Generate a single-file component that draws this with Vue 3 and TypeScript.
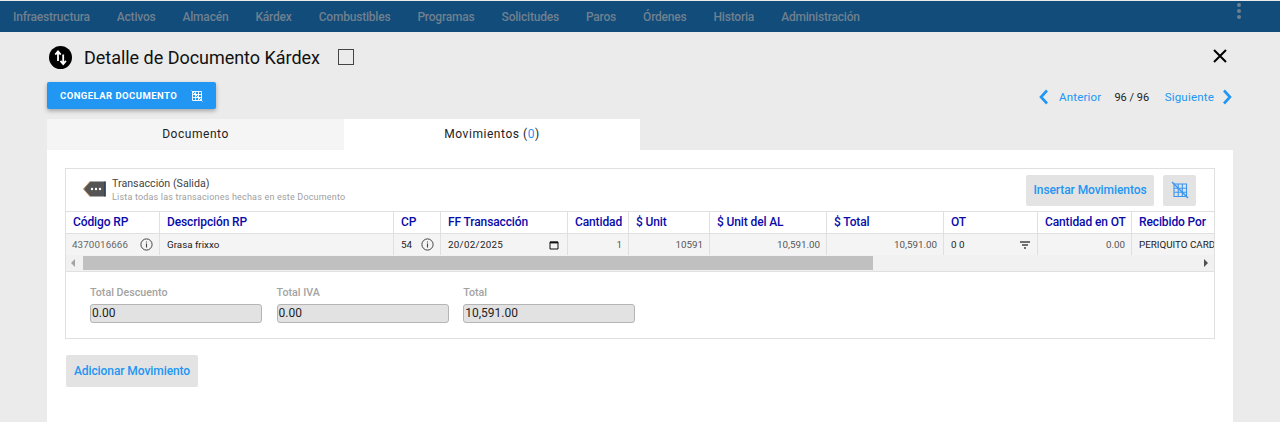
<script setup lang="ts">
interface Col { label: string; width: number }
const navItems: string[] = ['Infraestructura','Activos','Almacén','Kárdex','Combustibles','Programas','Solicitudes','Paros','Órdenes','Historia','Administración']
const cols: Col[] = [
  { label: 'Código RP', width: 94 },
  { label: 'Descripción RP', width: 234 },
  { label: 'CP', width: 47 },
  { label: 'FF Transacción', width: 127 },
  { label: 'Cantidad', width: 61 },
  { label: '$ Unit', width: 81 },
  { label: '$ Unit del AL', width: 117 },
  { label: '$ Total', width: 117 },
  { label: 'OT', width: 94 },
  { label: 'Cantidad en OT', width: 94 },
  { label: 'Recibido Por', width: 120 },
]
const gridTemplate = cols.map(c => c.width + 'px').join(' ')
const totals = [
  { label: 'Total Descuento', value: '0.00' },
  { label: 'Total IVA', value: '0.00' },
  { label: 'Total', value: '10,591.00' },
]
</script>

<template>
  <div class="page">
    <nav class="nav">
      <ul class="nav-list">
        <li v-for="n in navItems" :key="n">{{ n }}</li>
      </ul>
      <svg class="dots" width="6" height="18" viewBox="0 0 6 18"><circle cx="3" cy="3" r="2"/><circle cx="3" cy="9" r="2"/><circle cx="3" cy="15" r="2"/></svg>
    </nav>

    <main class="main">
      <header class="title-row">
        <span class="title-icon">
          <svg width="23" height="23" viewBox="0 0 23 23">
            <circle cx="11.5" cy="11.5" r="11.5" fill="#000"/>
            <path d="M9 15V5.5M6.3 8.6 9 5.3l2.7 3.3M14.2 8.5V18M11.5 14.9l2.7 3.3 2.7-3.3" fill="none" stroke="#fff" stroke-width="1.8"/>
          </svg>
        </span>
        <h1 class="title">Detalle de Documento Kárdex</h1>
        <span class="check"></span>
        <svg class="close" width="16" height="16" viewBox="0 0 16 16"><path d="M2 2l12 12M14 2 2 14" stroke="#000" stroke-width="2" fill="none"/></svg>
      </header>

      <div class="action-row">
        <button class="freeze" type="button">
          <span>CONGELAR DOCUMENTO</span>
          <svg width="12" height="12" viewBox="0 0 12 12" fill="none" stroke="#fff" stroke-width=".9"><path d="M1.5 1.5h9v9h-9zM1.5 4.5h9M1.5 7.5h9M4.5 1.5v9M7.5 1.5v9M.5.5l11 11"/></svg>
        </button>
        <div class="pager">
          <svg width="12" height="16" viewBox="0 0 12 16"><path d="M9 1.5 3 8l6 6.5" fill="none" stroke="#2196f3" stroke-width="2.6"/></svg>
          <a class="link prev">Anterior</a>
          <span class="count">96 / 96</span>
          <a class="link next">Siguiente</a>
          <svg width="12" height="16" viewBox="0 0 12 16"><path d="M3 1.5 9 8l-6 6.5" fill="none" stroke="#2196f3" stroke-width="2.6"/></svg>
        </div>
      </div>

      <div class="tabs">
        <div class="tab">Documento</div>
        <div class="tab active">Movimientos (<span class="blue">0</span>)</div>
      </div>

      <section class="card">
        <div class="panel">
          <div class="panel-head">
            <svg class="tag" width="23" height="16" viewBox="0 0 23 16">
              <path d="M7 .5H22.5V15.5H7L.5 8Z" fill="#555"/>
              <path d="M7 .5 .5 8 7 15.5" fill="none" stroke="#c9985a" stroke-width="1"/>
              <path d="M22 .5v15" stroke="#27425e" stroke-width="1.5"/>
              <circle cx="9" cy="8" r="1.2" fill="#fff"/><circle cx="13" cy="8" r="1.2" fill="#fff"/><circle cx="17" cy="8" r="1.2" fill="#fff"/>
            </svg>
            <div class="head-text">
              <div class="head-title">Transacción (Salida)</div>
              <div class="head-sub">Lista todas las transaciones hechas en este Documento</div>
            </div>
            <button class="btn-grey insert" type="button">Insertar Movimientos</button>
            <button class="btn-grey grid-btn" type="button" aria-label="Congelar">
              <svg width="18" height="18" viewBox="0 0 18 18" fill="none" stroke="#3a96f0" stroke-width="1.1"><path d="M3 3h12.5v12.5H3zM3 7.2h12.5M3 11.3h12.5M7.2 3v12.5M11.3 3v12.5"/><path d="M1 1l16 16" stroke-width="1.4"/></svg>
            </button>
          </div>

          <div class="table-wrap">
            <div class="grid thead" :style="{ gridTemplateColumns: gridTemplate }">
              <div v-for="c in cols" :key="c.label" class="th">{{ c.label }}</div>
            </div>
            <div class="grid tbody" :style="{ gridTemplateColumns: gridTemplate }">
              <div class="td between code"><span>4370016666</span><svg class="info" width="13" height="13" viewBox="0 0 13 13"><circle cx="6.5" cy="6.5" r="5.6" fill="none" stroke="#444" stroke-width="1"/><path d="M6.5 5.6v4M6.5 3.4v1.1" stroke="#444" stroke-width="1.1"/></svg></div>
              <div class="td dark">Grasa frixxo</div>
              <div class="td between dark"><span>54</span><svg class="info" width="13" height="13" viewBox="0 0 13 13"><circle cx="6.5" cy="6.5" r="5.6" fill="none" stroke="#444" stroke-width="1"/><path d="M6.5 5.6v4M6.5 3.4v1.1" stroke="#444" stroke-width="1.1"/></svg></div>
              <div class="td between date"><span>20/02/2025</span><svg width="10" height="10" viewBox="0 0 10 10"><path d="M1 2h8v7H1z" fill="none" stroke="#111" stroke-width="1"/><path d="M1 2.5h8" stroke="#111" stroke-width="1.8"/></svg></div>
              <div class="td right muted">1</div>
              <div class="td right muted">10591</div>
              <div class="td right muted">10,591.00</div>
              <div class="td right muted">10,591.00</div>
              <div class="td between dark"><span>0 0</span><svg width="12" height="8" viewBox="0 0 12 8"><path d="M1 1h10M3 4h6M5 7h2" stroke="#444" stroke-width="1.6"/></svg></div>
              <div class="td right muted">0.00</div>
              <div class="td dark nowrap">PERIQUITO CARDENAS</div>
            </div>
            <div class="scrollbar">
              <span class="arrow left"></span>
              <span class="track"><span class="thumb"></span></span>
              <span class="arrow right"></span>
            </div>
          </div>

          <div class="totals">
            <label v-for="t in totals" :key="t.label" class="field">
              <span class="field-label">{{ t.label }}</span>
              <span class="field-input">{{ t.value }}</span>
            </label>
          </div>
        </div>

        <button class="btn-grey add" type="button">Adicionar Movimiento</button>
      </section>
    </main>
  </div>
</template>

<style>
html, body { margin: 0; background: #ebebeb; overflow: hidden; }
</style>

<style scoped>
.page { width: 1280px; height: 422px; overflow: hidden; font-family: Roboto, "Liberation Sans", sans-serif; background: #ebebeb; color: #000; padding-top: 1px; box-sizing: border-box; }
.nav { height: 31px; background: #114c7b; display: flex; align-items: center; justify-content: space-between; padding: 0 38px 0 13px; }
.nav-list { display: flex; gap: 27px; list-style: none; margin: 0; padding: 0; font-size: 12px; letter-spacing: -.2px; color: #70808e; font-weight: 500; }
.dots { fill: #70808e; margin-top: -11px; }
.main { padding: 0 47px; }
.title-row { display: flex; align-items: center; height: 50px; }
.title-icon { display: flex; margin-left: 2px; margin-right: 12px; }
.title { font-size: 18px; font-weight: 400; margin: 0; color: #111; letter-spacing: -.03px; }
.check { width: 14px; height: 14px; border: 1px solid #444; margin-left: 18px; }
.close { margin-left: auto; margin-right: 5px; margin-top: -2px; }
.action-row { display: flex; align-items: flex-start; justify-content: space-between; height: 37px; }
.freeze { width: 169px; height: 27px; background: #2196f3; border: 0; border-radius: 2px; color: #fff; display: flex; align-items: center; gap: 14px; padding: 0 0 0 13px; font-family: inherit; font-size: 9.5px; font-weight: 700; letter-spacing: .45px; box-shadow: 0 2px 4px rgba(0,0,0,.3); }
.pager { display: flex; align-items: center; font-size: 11.5px; letter-spacing: .2px; height: 30px; }
.link { color: #2196f3; }
.prev { margin: 0 13px 0 9px; }
.count { color: #222; margin-right: 15.5px; font-size: 11px; letter-spacing: 0; }
.next { margin-right: 7px; }
.tabs { display: flex; height: 31px; }
.tab { width: 297px; background: #f5f5f5; display: flex; align-items: center; justify-content: center; font-size: 12px; letter-spacing: .55px; color: #222; padding-bottom: 2px; box-sizing: border-box; }
.tab.active { background: #fff; width: 296px; }
.blue { color: #2196f3; }
.card { background: #fff; height: 272px; padding: 18px 18px 0; box-sizing: border-box; }
.panel { border: 1px solid #e0e0e0; width: 1150px; box-sizing: border-box; height: 171px; overflow: hidden; }
.panel-head { height: 42px; display: flex; align-items: center; padding: 0 18px 0 17px; }
.tag { flex: none; margin: -3px 6px 0 0; }
.head-text { flex: 1; padding-top: 1px; }
.head-title { font-size: 10.7px; color: #444; line-height: 14px; }
.head-sub { font-size: 9px; color: #a0a0a0; line-height: 13px; letter-spacing: .19px; }
.btn-grey { background: #e3e3e3; border: 0; border-radius: 2px; color: #2196f3; font-family: inherit; font-weight: 500; font-size: 12px; letter-spacing: -.08px; padding: 0; }
.insert { width: 128px; height: 31px; }
.grid-btn { width: 33px; height: 31px; margin-left: 9px; display: flex; align-items: center; justify-content: center; }
.table-wrap { overflow: hidden; border-top: 1px solid #e0e0e0; border-bottom: 1px solid #e0e0e0; }
.grid { display: grid; width: max-content; }
.thead { height: 21px; border-bottom: 1px solid #e0e0e0; }
.th { font-size: 12px; font-weight: 500; letter-spacing: -.12px; color: #0a0aaa; padding: 0 7px; line-height: 21px; border-right: 1px solid #e0e0e0; box-sizing: border-box; white-space: nowrap; overflow: hidden; }
.tbody { height: 21px; background: #f4f4f4; }
.td { font-size: 9.8px; line-height: 21px; padding: 0 6px 0 7px; border-right: 1px solid #e0e0e0; box-sizing: border-box; white-space: nowrap; overflow: hidden; }
.between { display: flex; align-items: center; justify-content: space-between; }
.right { text-align: right; }
.muted { color: #555; }
.code { color: #666; padding-left: 6px; letter-spacing: .1px; }
.dark { color: #222; }
.date { color: #222; letter-spacing: .3px; padding-right: 8px; }
.scrollbar { height: 16px; background: #f1f1f1; display: flex; align-items: center; }
.arrow { width: 0; height: 0; border-top: 4px solid transparent; border-bottom: 4px solid transparent; flex: none; }
.arrow.left { border-right: 4px solid #a3a3a3; margin: 0 8px 0 5px; }
.arrow.right { border-left: 4px solid #505050; margin: 0 6px 0 0; }
.track { flex: 1; height: 100%; display: block; margin-right: 24px; }
.thumb { display: block; width: 790px; height: 14px; margin-top: 1px; background: #c0c0c0; }
.totals { display: flex; gap: 14.6px; padding: 14px 24px 0; }
.field { display: flex; flex-direction: column; width: 172px; }
.field-label { font-size: 10.7px; font-weight: 500; color: #a3a3a3; line-height: 14px; margin-bottom: 4px; }
.field-input { height: 17px; line-height: 16px; border: 1px solid #b5b5b5; border-radius: 3px; background: #e2e2e2; font-size: 12px; color: #222; padding-left: 1px; }
.add { display: block; width: 132px; height: 32px; margin-top: 16px; margin-left: 1px; }
.nowrap { white-space: nowrap; }
</style>
